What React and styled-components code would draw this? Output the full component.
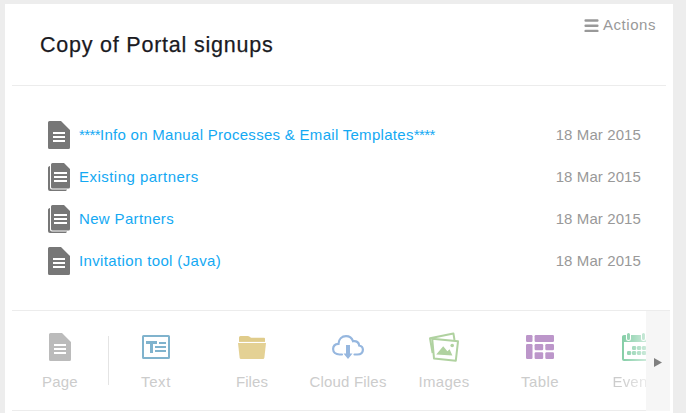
import React from 'react';
import styled, { createGlobalStyle } from 'styled-components';

const GlobalStyle = createGlobalStyle`
  * { box-sizing: border-box; }
  body {
    margin: 0;
    background: #ededed;
    font-family: "Liberation Sans", Arial, sans-serif;
    font-size: 15px;
    overflow: hidden;
  }
  svg { display: block; flex: none; overflow: visible; }
`;

const Page = styled.div`
  height: 413px;
  padding: 4px 13px 0 5px;
  overflow: hidden;
`;

const Panel = styled.main`
  height: 409px;
  padding: 0 3px 0 7px;
  background: #fff;
`;

const Header = styled.header`
  display: flex;
  justify-content: space-between;
  align-items: flex-start;
  height: 82px;
  margin-right: 4px;
  padding: 0 10px 0 28px;
  border-bottom: 1px solid #ececec;
`;

const Title = styled.h1`
  margin: 27px 0 0;
  color: #1a1a1f;
  font-size: 21.5px;
  line-height: 28px;
  font-weight: 400;
  letter-spacing: 0.78px;
  white-space: nowrap;
  -webkit-text-stroke: 0.25px #1a1a1f;
`;

const ActionsButton = styled.button`
  display: flex;
  align-items: center;
  gap: 4px;
  margin: 11px 0 0;
  padding: 0;
  border: 0;
  background: none;
  color: #999;
  font: inherit;
  line-height: 20px;
  letter-spacing: 0.55px;
`;

const List = styled.ul`
  display: flex;
  flex-direction: column;
  height: 224px;
  margin: 0 4px 0 0;
  padding: 28px 25px 0 36px;
  list-style: none;
`;

const Row = styled.li`
  display: flex;
  align-items: center;
  height: 42px;
`;

const PageLink = styled.a`
  flex: 1;
  margin-left: 9px;
  color: #14a9f3;
  line-height: 20px;
  letter-spacing: ${(p) => p.$spacing}px;
  text-decoration: none;
  white-space: nowrap;
`;

const Stars = styled.span`
  letter-spacing: -0.6px;
`;

const DateText = styled.time`
  color: #999;
  line-height: 20px;
  letter-spacing: 0.1px;
`;

const Toolbar = styled.section`
  display: flex;
  height: 101px;
`;

const Tools = styled.div`
  display: flex;
  width: 634px;
  overflow: hidden;
  border-top: 1px solid #ececec;
  border-bottom: 1px solid #ececec;
`;

const Divider = styled.div`
  width: 1px;
  height: 49px;
  margin: 25px -1px 0 0;
  flex: none;
  background: #e4e4e4;
`;

const Tool = styled.div`
  display: flex;
  flex: none;
  flex-direction: column;
  align-items: center;
  width: 96px;
  padding-top: 20px;
  color: #ccc;
  line-height: 20px;
  letter-spacing: ${(p) => p.$spacing}px;
  white-space: nowrap;
  mask-image: ${(p) => (p.$fade ? 'linear-gradient(90deg, #000 32px, rgba(0,0,0,.4) 58px)' : 'none')};
`;

const ToolIcon = styled.span`
  display: flex;
  align-items: center;
  justify-content: center;
  height: 32px;
  margin-bottom: 9px;
`;

const ScrollButton = styled.button`
  display: flex;
  align-items: center;
  flex: none;
  width: 24px;
  height: 100%;
  margin: 0;
  padding: 2px 0 0 8px;
  border: 0;
  border-top: 1px solid #ececec;
  background: #f6f6f6;
`;

function MenuIcon() {
  return (
    <svg width="15" height="15" viewBox="0 0 15 15" stroke="#999" strokeWidth="2.4" strokeLinecap="round">
      <path d="M1.6 2.500h11.800M1.600 7.700h11.800M1.600 12.900h11.800" />
    </svg>
  );
}

function DocIcon({ color = '#777' }) {
  return (
    <svg width="22" height="28" viewBox="0 0 22 28">
      <path fill={color} d="M1.500 0H13l9 9v17.500a1.500 1.500 0 0 1-1.500 1.500h-19A1.500 1.500 0 0 1 0 26.500v-25A1.500 1.500 0 0 1 1.500 0z" />
      <path stroke="#fff" strokeWidth="2" d="M5 12h12M5 16h12M5 20h12" />
    </svg>
  );
}

function StackIcon() {
  return (
    <svg width="22" height="28" viewBox="0 0 22 28">
      <path fill="#777" d="M4.500 0H16l6 6v18a1.500 1.500 0 0 1-1.500 1.500h-16A1.500 1.500 0 0 1 3 24V1.500A1.500 1.500 0 0 1 4.500 0z" />
      <path fill="#777" d="M2 3v21.500A2 2 0 0 0 4 26.500h15c-.4 1-1 1.500-2 1.500H2a2 2 0 0 1-2-2V5c0-1 .7-1.800 2-2z" />
      <path stroke="#fff" strokeWidth="2" d="M6 10h13M6 14h13M6 18h13" />
    </svg>
  );
}

function TextIcon() {
  return (
    <svg width="28" height="24" viewBox="0 0 28 24" fill="none" stroke="#80b3cd">
      <rect x="1" y="1" width="26" height="22" rx=".5" strokeWidth="2" />
      <path strokeWidth="3" d="M4 7.500h11M9.500 7v11" />
      <path strokeWidth="2" d="M17 8h7M13 12h11M13 16h11" />
    </svg>
  );
}

function FolderIcon() {
  return (
    <svg width="28" height="24" viewBox="0 0 28 24">
      <path fill="#e0cc8b" d="M1 6V2.500Q1 1 2.500 1h7q1.500 0 2.500 1l1 .8h13q1 0 1 1V7H1z" />
      <path fill="#e4d194" d="M0 8h28l-1.600 14.500Q26.200 24 25 24H3Q1.800 24 1.600 22.500z" />
      <path stroke="#fff" d="M0 7.400h28" />
    </svg>
  );
}

function CloudIcon() {
  return (
    <svg width="32" height="24" viewBox="0 0 32 24">
      <path fill="none" stroke="#96b7df" strokeWidth="2.200" strokeLinecap="round" d="M10 19.500H7.500C3.800 19.500 1.100 17.200 1.100 14.100c0-3 2.100-5 5.400-5.200C6.700 4 9.900 1.200 14 1.200c3.500 0 6 2 7 5 3.500-.7 6 1.400 6.200 4.300 2.400.5 3.700 2.100 3.700 4.300 0 2.900-2.300 4.700-5.600 4.700H22.500" />
      <path fill="#96b7df" d="M14 10h4v8.500h2.500L16 24l-4.500-5.500H14z" />
    </svg>
  );
}

function ImagesIcon() {
  return (
    <svg width="30" height="30" viewBox="0 0 30 30">
      <path fill="none" stroke="#b0d2a0" strokeWidth="2" strokeLinejoin="round" d="M3.600 21L1 6.300 24.400 1.400 25.500 8" />
      <path fill="#fff" stroke="#b0d2a0" strokeWidth="2" strokeLinejoin="round" d="M3.200 6.700l25.800 2.600-2.200 19.400-21.800-2.200z" />
      <path fill="#b0d2a0" d="M7.200 22.400l7-8.200 4.200 5 2.200-2 2.800 6.300z" />
      <circle cx="23.200" cy="13.500" r="1.800" fill="#b0d2a0" />
    </svg>
  );
}

function TableIcon() {
  return (
    <svg width="28" height="24" viewBox="0 0 28 24" fill="#bc96ca">
      <rect width="6.500" height="7" rx="1.200" />
      <rect x="8.600" width="19.400" height="7" rx="1.200" />
      <rect y="9" width="6.500" height="15" rx="1.200" />
      <rect x="8.600" y="9" width="8.600" height="6.200" rx="1.200" />
      <rect x="19.300" y="9" width="8.700" height="6.200" rx="1.200" />
      <rect x="8.600" y="17.300" width="8.600" height="6.700" rx="1.200" />
      <rect x="19.300" y="17.300" width="8.700" height="6.700" rx="1.200" />
    </svg>
  );
}

function CalendarIcon() {
  return (
    <svg width="28" height="28" viewBox="0 0 28 28">
      <rect x="1" y="4" width="26" height="23" rx="1" fill="#fff" stroke="#7ecba2" strokeWidth="2" />
      <path fill="#7ecba2" d="M0 4q0-2 2-2h24q2 0 2 2v5H0z" />
      <path stroke="#fff" strokeWidth="5" strokeLinecap="round" d="M6.500 1v4.500M21.500 1v4.500" />
      <path stroke="#7ecba2" strokeWidth="3" strokeLinecap="round" d="M6.500 1.500v4M21.500 1.500v4" />
      <g fill="#7ecba2">
        {[10, 15, 20].map((x) => <rect key={x} x={x} y="13" width="4.200" height="4" rx="1.200" />)}
        {[5, 10, 15, 20].map((x) => <rect key={x} x={x} y="18" width="4.200" height="4" rx="1.200" />)}
      </g>
    </svg>
  );
}

const rows = [
  { title: 'Info on Manual Processes & Email Templates', icon: DocIcon, spacing: 0.29, starred: true },
  { title: 'Existing partners', icon: StackIcon, spacing: 0.47 },
  { title: 'New Partners', icon: StackIcon, spacing: 0.35 },
  { title: 'Invitation tool (Java)', icon: DocIcon, spacing: 0.36 },
];

const tools = [
  { label: 'Text', icon: TextIcon, spacing: 0.6 },
  { label: 'Files', icon: FolderIcon, spacing: 0.1 },
  { label: 'Cloud Files', icon: CloudIcon, spacing: 0.2 },
  { label: 'Images', icon: ImagesIcon, spacing: 0.3 },
  { label: 'Table', icon: TableIcon, spacing: 0.4 },
  { label: 'Events', icon: CalendarIcon, spacing: 0.2, fade: true },
];

export default function App() {
  return (
    <>
      <GlobalStyle />
      <Page>
        <Panel>
          <Header>
            <Title>Copy of Portal signups</Title>
            <ActionsButton><MenuIcon />Actions</ActionsButton>
          </Header>
          <List>
            {rows.map(({ title, icon: Icon, spacing, starred }) => (
              <Row key={title}>
                <Icon />
                <PageLink $spacing={spacing}>
                  {starred && <Stars>****</Stars>}
                  {title}
                  {starred && <Stars>****</Stars>}
                </PageLink>
                <DateText>18 Mar 2015</DateText>
              </Row>
            ))}
          </List>
          <Toolbar>
            <Tools>
              <Tool $spacing={0.2}>
                <ToolIcon><DocIcon color="#bbb" /></ToolIcon>
                Page
              </Tool>
              <Divider />
              {tools.map(({ label, icon: Icon, spacing, fade }) => (
                <Tool key={label} $spacing={spacing} $fade={fade}>
                  <ToolIcon><Icon /></ToolIcon>
                  {label}
                </Tool>
              ))}
            </Tools>
            <ScrollButton aria-label="Show more">
              <svg width="8" height="9" viewBox="0 0 8 9" fill="#808080"><path d="M0 0l8 4.500L0 9z" /></svg>
            </ScrollButton>
          </Toolbar>
        </Panel>
      </Page>
    </>
  );
}
